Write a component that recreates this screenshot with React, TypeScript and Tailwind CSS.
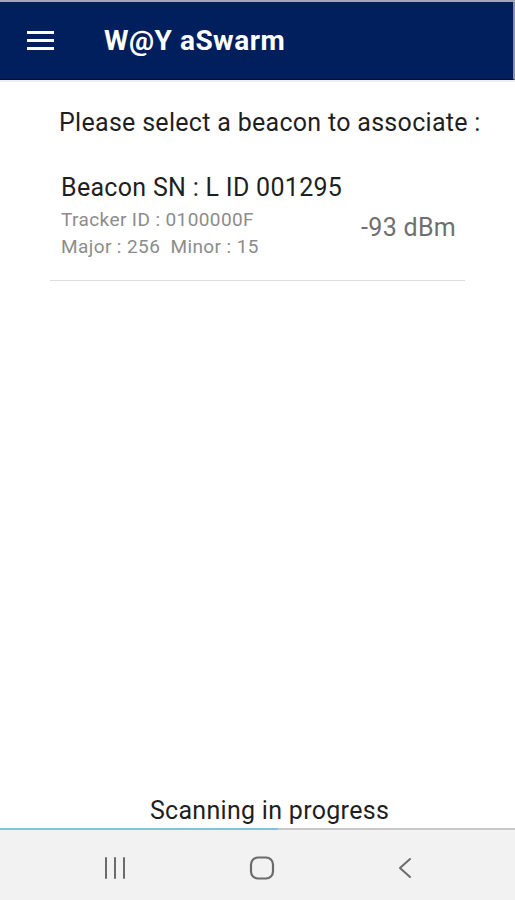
import React from "react";

export default function App() {
  return (
    <div
      className="w-[515px] h-[900px] flex flex-col bg-white overflow-hidden"
      style={{ fontFamily: "Roboto, 'Liberation Sans', sans-serif" }}
    >
      <div className="h-[2px] bg-[#a3a7b3]" />
      <div className="h-[78px] bg-[#001f5c] flex items-center border-r-[2px] border-[#8a90a3] border-b border-b-[#000e3a]">
        <div className="ml-[27px] w-[27px] flex flex-col gap-[5px]">
          <div className="h-[3px] bg-white" />
          <div className="h-[3px] bg-white" />
          <div className="h-[3px] bg-white" />
        </div>
        <div className="ml-[50px] text-white text-[28px] font-bold tracking-[0.5px] leading-none">
          W@Y aSwarm
        </div>
      </div>
      <div className="h-[2px] bg-[#eeeeef]" />
      <div className="flex-1 flex flex-col">
        <div className="mt-[26px] pl-[59px] text-[25px] tracking-[0.3px] leading-[30px] text-[#1f1f1f]">
          Please select a beacon to associate :
        </div>
        <div className="mt-[35px] mx-[50px] flex items-center border-b border-[#dcdcdc] pb-[20px]">
          <div className="flex-1 pl-[11px]">
            <div className="text-[25px] tracking-[0.3px] leading-[30px] text-[#1f1f1f]">Beacon SN : L ID 001295</div>
            <div className="mt-[3px] text-[19px] tracking-[0.4px] leading-[27px] text-[#8c8c8c]">Tracker ID : 0100000F</div>
            <div className="text-[19px] tracking-[0.4px] leading-[27px] text-[#8c8c8c] whitespace-pre">Major : 256  Minor : 15</div>
          </div>
          <div className="pr-[9px] mt-[22px] text-[25px] tracking-[0.3px] text-[#6f6f6f]">-93 dBm</div>
        </div>
        <div className="flex-1" />
        <div className="pl-[24px] text-center text-[25px] tracking-[0.3px] leading-[30px] text-[#1f1f1f] mb-[2px]">Scanning in progress</div>
        <div className="h-[2px] flex bg-[#c8c8c8]">
          <div className="w-[278px] bg-[#7cc4e4]" />
        </div>
      </div>
      <div className="h-[70px] bg-[#f2f2f2] flex items-center justify-between pl-[103px] pr-[102px]">
        <svg width="24" height="24" viewBox="0 0 24 24" className="mt-[6px]">
          <g stroke="#6b6b6b" strokeWidth="2" strokeLinecap="round">
            <line x1="3" y1="2" x2="3" y2="22" />
            <line x1="12" y1="2" x2="12" y2="22" />
            <line x1="21" y1="2" x2="21" y2="22" />
          </g>
        </svg>
        <svg width="26" height="26" viewBox="0 0 26 26" className="mt-[6px]">
          <rect x="2" y="2.5" width="22" height="21" rx="7" fill="none" stroke="#6b6b6b" strokeWidth="2.2" />
        </svg>
        <svg width="16" height="24" viewBox="0 0 16 24" className="mt-[6px]">
          <polyline points="13,3 3,12 13,21" fill="none" stroke="#6b6b6b" strokeWidth="2" strokeLinecap="round" strokeLinejoin="round" />
        </svg>
      </div>
    </div>
  );
}
